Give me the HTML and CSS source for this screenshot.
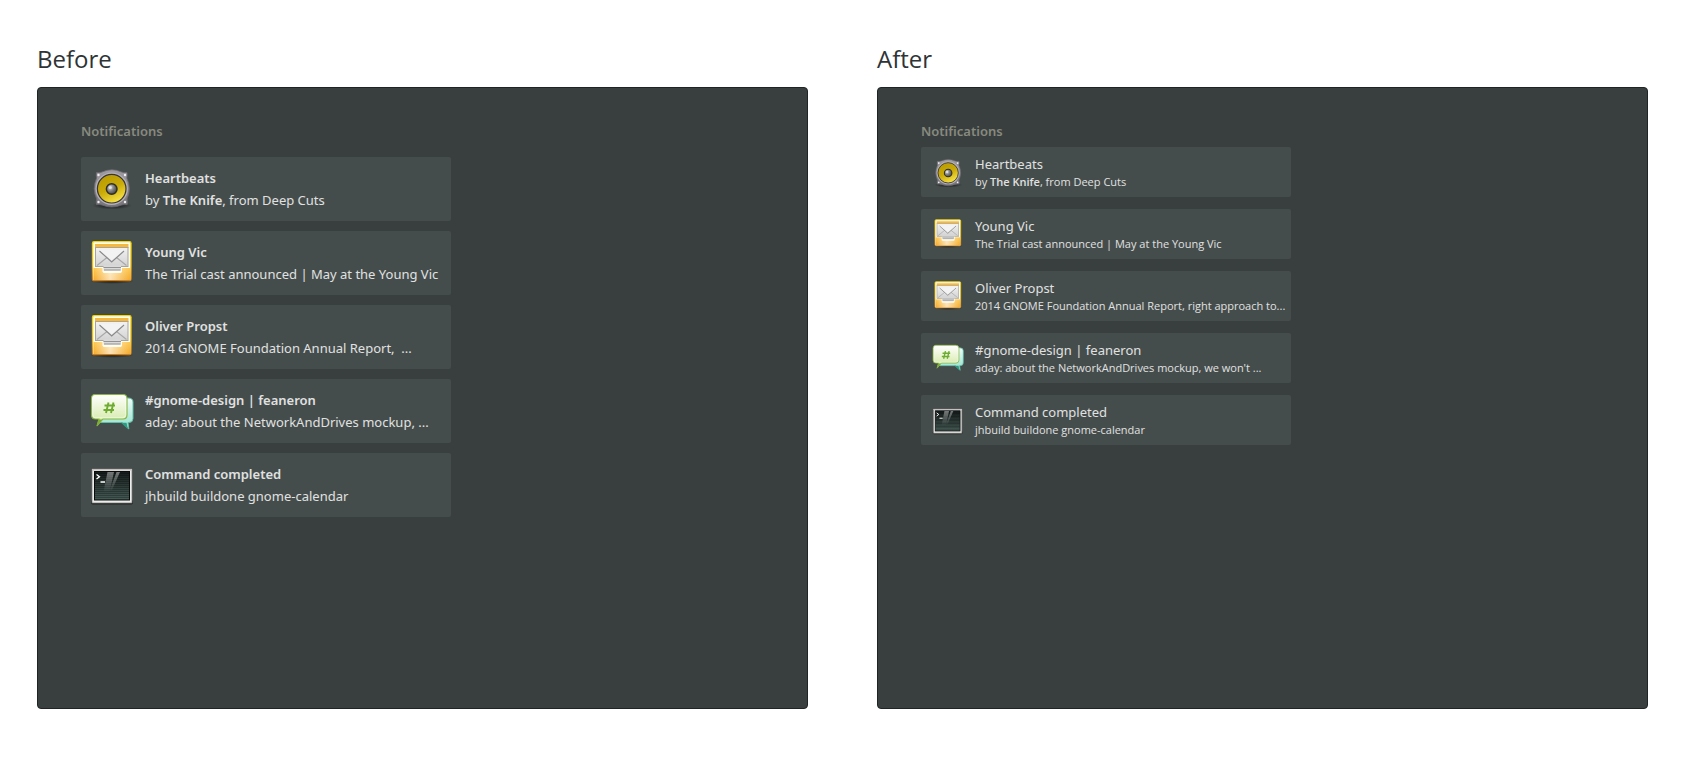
FILE: index.html
```html
<!DOCTYPE html>
<html lang="en">
<head>
<meta charset="utf-8">
<title>Notifications: before and after</title>
<link rel="stylesheet" href="styles.css">
</head>
<body>
<svg class="sprite" aria-hidden="true">
  <defs>
    <linearGradient id="rim" x1="0" y1="0" x2="0" y2="1"><stop offset="0" stop-color="#a09ca2"/><stop offset="1" stop-color="#77747a"/></linearGradient>
    <linearGradient id="cone" x1="0.2" y1="0" x2="0.7" y2="1"><stop offset="0" stop-color="#b89a00"/><stop offset="0.5" stop-color="#c9aa08"/><stop offset="1" stop-color="#fbe84a"/></linearGradient>
    <radialGradient id="cap" cx="0.35" cy="0.35" r="0.7"><stop offset="0" stop-color="#d8d8d8"/><stop offset="0.5" stop-color="#808080"/><stop offset="1" stop-color="#444"/></radialGradient>
    <radialGradient id="shade"><stop offset="0" stop-color="#000" stop-opacity="0.75"/><stop offset="1" stop-color="#000" stop-opacity="0"/></radialGradient>
    <linearGradient id="tray" x1="0" y1="0" x2="0" y2="1"><stop offset="0" stop-color="#fdc850"/><stop offset="1" stop-color="#f4a92a"/></linearGradient>
    <linearGradient id="trayEdge" x1="0" y1="0" x2="0" y2="1"><stop offset="0" stop-color="#f2d400"/><stop offset="0.6" stop-color="#edbb14"/><stop offset="1" stop-color="#cf7d15"/></linearGradient>
    <linearGradient id="trayShine"><stop offset="0" stop-color="#fff" stop-opacity="0"/><stop offset="0.45" stop-color="#fff" stop-opacity="0.65"/><stop offset="1" stop-color="#fff" stop-opacity="0"/></linearGradient>
    <linearGradient id="paper" x1="0" y1="0" x2="0" y2="1"><stop offset="0" stop-color="#f2f2f2"/><stop offset="1" stop-color="#d2d2d2"/></linearGradient>
    <linearGradient id="bubble" x1="0" y1="0" x2="0" y2="1"><stop offset="0" stop-color="#ffffff"/><stop offset="1" stop-color="#cfe79b"/></linearGradient>
    <linearGradient id="bubbleBack" x1="0" y1="0" x2="0" y2="1"><stop offset="0" stop-color="#eefcf8"/><stop offset="1" stop-color="#8fe0cb"/></linearGradient>
    <linearGradient id="screen" x1="0" y1="0" x2="0" y2="1"><stop offset="0" stop-color="#141a19"/><stop offset="1" stop-color="#465c56"/></linearGradient>
    <linearGradient id="glare" x1="0" y1="0" x2="0" y2="1"><stop offset="0" stop-color="#fff" stop-opacity="0.42"/><stop offset="1" stop-color="#fff" stop-opacity="0"/></linearGradient>
    <pattern id="scan" width="3" height="2" patternUnits="userSpaceOnUse"><rect width="3" height="1" fill="#000" fill-opacity="0.25"/></pattern>
  </defs>
  <symbol id="speaker" viewBox="0 -1 48 48">
    <ellipse cx="24" cy="39.500" rx="20" ry="4" fill="url(#shade)"/>
    <path d="M8.500 6.500q3 .5 5.500-.5 10-4.500 19.500 0 2.500 1 5.500.5.500 3-.2 5.500 5 10.500.2 21 .7 2.500.2 5.500-3-.5-5.500.5-10 4-19.700 0-2.500-1-5.500-.5-.5-3 .2-5.500-5-10.500 0-21Q8 9.500 8.500 6.500z" fill="url(#rim)" stroke="#6b696f" stroke-width=".8"/>
    <g fill="#f0f0f2"><circle cx="10.500" cy="9" r="1.200"/><circle cx="37" cy="9" r="1.200"/><circle cx="10.500" cy="36" r="1.200"/><circle cx="37" cy="36" r="1.200"/></g>
    <circle cx="23.700" cy="22.700" r="15.200" fill="none" stroke="#b4b2b8" stroke-width="2"/>
    <circle cx="23.700" cy="22.700" r="14.300" fill="url(#cone)" stroke="#37353a" stroke-width="1.200"/>
    <circle cx="23.700" cy="23" r="5.300" fill="url(#cap)" stroke="#2f2f28" stroke-width="1.500"/>
    <circle cx="22.300" cy="21.500" r="1.600" fill="#eee" fill-opacity=".7"/>
  </symbol>
  <symbol id="mail" viewBox="0 0 48 48">
    <ellipse cx="24" cy="42" rx="22" ry="3" fill="url(#shade)"/>
    <rect x="4.500" y="2.700" width="38.500" height="39" rx="1.500" fill="#fffdf0" stroke="url(#trayEdge)" stroke-width="1.300"/>
    <rect x="7" y="5" width="33.500" height="4" fill="#f5b73c"/>
    <rect x="7.500" y="8.500" width="32.500" height="19" fill="url(#paper)" stroke="#a9a495"/>
    <path d="M9 26.500 19 18.500M38.500 26.500l-10-8" fill="none" stroke="#a8a8a8" stroke-width="1.100"/>
    <path d="m11.500 12 12.200 11 12.300-11" fill="none" stroke="#8a8a8a" stroke-width="1.200"/>
    <path d="m11.500 10.800 12.200 10.700 12.300-10.700z" fill="#f3f3f3"/>
    <path d="M5.500 29h37v12h-37z" fill="url(#tray)"/>
    <path d="M5.500 29h37v12h-37z" fill="url(#trayShine)"/>
    <path d="M14.500 28h19.500v4.500l-1 1.500H15.500l-1-1.500z" fill="#fffdf0"/>
    <path d="M15.500 26.500h17.500v5h-17.500z" fill="#dadada"/>
    <path d="M15.500 28.500h17.500M16 31h16.500" fill="none" stroke="#939393"/>
  </symbol>
  <symbol id="chat" viewBox="0 0 48 48">
    <path d="M12 11h28q5 0 5 4v16.500q0 4-4 4h-1l.8 6.500L34 35.500H12z" fill="url(#bubbleBack)" stroke="#5fbda6" stroke-width="1"/>
    <path d="m33 35.700 7 6.500-1.500-6.500z" fill="#2c9c84"/>
    <path d="M7 7.500h28q4 0 4 4V28q0 4-4 4H15l-6 7 2-7H7.500q-4 0-4-4V11.500q0-4 3.500-4z" fill="url(#bubble)" stroke="#87b440" stroke-width="1.100"/>
    <path d="M10.500 32.500h4L8.500 39.500z" fill="#7bae32"/>
    <path d="M7.500 8.800h27q3.200 0 3.200 3.200v15.500q0 3.200-3.200 3.200h-27q-2.700 0-2.700-3V12q0-3.200 2.700-3.200z" fill="none" stroke="#fff" stroke-opacity=".6" stroke-width=".8"/>
    <path d="M20.500 15.500 18 26M25.500 15.500 23 26M16.500 18.500h10.500M15.500 23H26" fill="none" stroke="#6dac30" stroke-width="1.900"/>
  </symbol>
  <symbol id="terminal" viewBox="0 0 48 48">
    <rect x="3" y="39" width="42" height="4.500" rx="2" fill="#151918" fill-opacity=".8"/>
    <path d="M4 8h40v34H4z" fill="#ececec" stroke="#777572" stroke-width=".7"/>
    <path d="M4 8h40v1.500H4z" fill="#c5bfc0"/>
    <rect x="6.500" y="10.500" width="35" height="28.500" fill="url(#screen)" stroke="#080b0a"/>
    <rect x="7" y="11" width="34" height="27.500" fill="url(#scan)"/>
    <path d="M19.500 11h6.500L21.500 31H15.500zM28.500 11H32L24 29h-2z" fill="url(#glare)"/>
    <path d="m8.500 13.500 3 2.200-3 2.300M12.500 21H17" fill="none" stroke="#fff" stroke-width="1.300"/>
  </symbol>
</svg>
<main class="comparison">
  <section class="column">
    <h1 class="column-title">Before</h1>
    <div class="panel">
      <h2 class="panel-title">Notifications</h2>
      <ul class="list">
        <li class="card"><svg class="icon"><use href="#speaker"/></svg><div class="text"><h3 class="title">Heartbeats</h3><p class="body">by <b>The Knife</b>, from Deep Cuts</p></div></li>
        <li class="card"><svg class="icon"><use href="#mail"/></svg><div class="text"><h3 class="title">Young Vic</h3><p class="body">The Trial cast announced | May at the Young Vic</p></div></li>
        <li class="card"><svg class="icon"><use href="#mail"/></svg><div class="text"><h3 class="title">Oliver Propst</h3><p class="body">2014 GNOME Foundation Annual Report,  ...</p></div></li>
        <li class="card"><svg class="icon"><use href="#chat"/></svg><div class="text"><h3 class="title">#gnome-design | feaneron</h3><p class="body">aday: about the NetworkAndDrives mockup, ...</p></div></li>
        <li class="card"><svg class="icon"><use href="#terminal"/></svg><div class="text"><h3 class="title">Command completed</h3><p class="body">jhbuild buildone gnome-calendar</p></div></li>
      </ul>
    </div>
  </section>
  <section class="column compact">
    <h1 class="column-title">After</h1>
    <div class="panel">
      <h2 class="panel-title">Notifications</h2>
      <ul class="list">
        <li class="card"><svg class="icon" viewBox="1 0 45 45"><use href="#speaker" width="48" height="48"/></svg><div class="text"><h3 class="title">Heartbeats</h3><p class="body">by <b>The Knife</b>, from Deep Cuts</p></div></li>
        <li class="card"><svg class="icon"><use href="#mail"/></svg><div class="text"><h3 class="title">Young Vic</h3><p class="body">The Trial cast announced | May at the Young Vic</p></div></li>
        <li class="card"><svg class="icon"><use href="#mail"/></svg><div class="text"><h3 class="title">Oliver Propst</h3><p class="body">2014 GNOME Foundation Annual Report, right approach to...</p></div></li>
        <li class="card"><svg class="icon" viewBox="2 3 44 44"><use href="#chat" width="48" height="48"/></svg><div class="text"><h3 class="title">#gnome-design | feaneron</h3><p class="body">aday: about the NetworkAndDrives mockup, we won't ...</p></div></li>
        <li class="card"><svg class="icon" viewBox="2 1 45 45"><use href="#terminal" width="48" height="48"/></svg><div class="text"><h3 class="title">Command completed</h3><p class="body">jhbuild buildone gnome-calendar</p></div></li>
      </ul>
    </div>
  </section>
</main>
</body>
</html>
```
FILE: styles.css
```css
* { box-sizing: border-box; }
body {
  margin: 0;
  background: #fff;
  font-family: "Noto Sans", "Open Sans", sans-serif;
}
h1, h2, h3, p, ul { margin: 0; padding: 0; }
.sprite { position: absolute; width: 0; height: 0; }
.comparison {
  display: grid;
  grid-template-columns: 1fr 1fr;
  gap: 69px;
  min-height: 100vh;
  padding: 42px 40px 57px 37px;
}
.column { display: flex; flex-direction: column; min-width: 0; }
.column-title {
  margin-bottom: 11px;
  color: #2e3436;
  font-family: "Open Sans", "Noto Sans", sans-serif;
  font-size: 24px;
  font-weight: 400;
  line-height: 34px;
}
.panel {
  flex: 1;
  padding: 32px 43px;
  background: #393f3f;
  border: 1px solid #1f2525;
  border-radius: 4px;
}
.panel-title {
  margin-bottom: 15px;
  color: #888a7f;
  font-size: 13px;
  font-weight: 600;
  line-height: 22px;
}
.list {
  display: flex;
  flex-direction: column;
  gap: 10px;
  max-width: 370px;
  list-style: none;
}
.card {
  display: flex;
  align-items: center;
  gap: 9px;
  padding: 8px 7px;
  background: #454d4c;
  border-radius: 2px;
}
.icon { flex: none; width: 48px; height: 48px; }
.text { min-width: 0; color: #e0e1e1; white-space: pre; }
.title { font-size: 13px; font-weight: 600; line-height: 22px; }
.body { font-size: 13px; line-height: 22px; }
.body b { font-weight: 600; }

.compact .panel-title { margin-bottom: 5px; }
.compact .list { gap: 12px; }
.compact .card { gap: 11px; height: 50px; padding: 0 11px; }
.compact .icon { width: 32px; height: 32px; }
.compact .text { padding-top: 2px; }
.compact .title { font-weight: 400; line-height: 18px; }
.compact .body {
  font-family: "Open Sans", "Noto Sans", sans-serif;
  font-size: 11px;
  line-height: 18px;
}
```
